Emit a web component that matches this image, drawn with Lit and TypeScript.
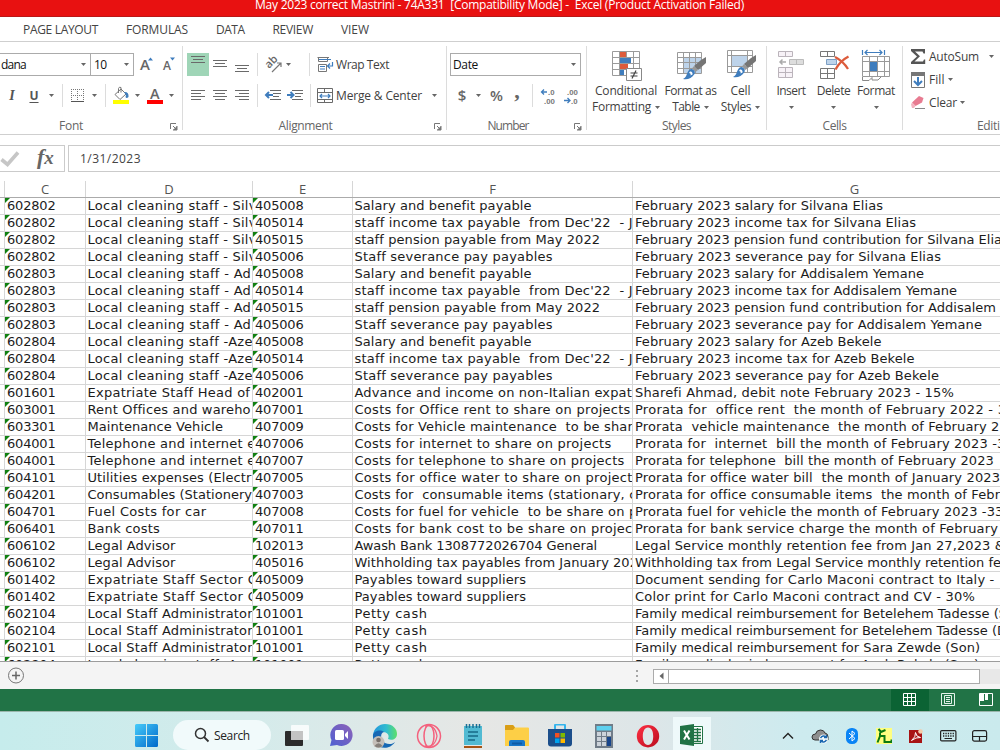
import { LitElement, css, html, svg } from 'lit'
import type { TemplateResult } from 'lit'
import { customElement, property, state } from 'lit/decorators.js'
import { classMap } from 'lit/directives/class-map.js'
import { styleMap } from 'lit/directives/style-map.js'

type Cell = [text: string, width: number]
type Row = [account: string, name: Cell, contra: string, contraName: Cell, note: Cell]

const SILVANA: Cell = ['Local cleaning staff - Silv', 168]
const ADDISALEM: Cell = ['Local cleaning staff - Ad', 162.5]
const AZEB: Cell = ['Local cleaning staff -Aze', 164]
const SALARY: Cell = ['Salary and benefit payable', 176]
const TAX: Cell = ['staff income tax payable  from Dec\'22  - J', 277]
const PENSION: Cell = ['staff pension payable from May 2022', 244.5]
const SEVERANCE: Cell = ['Staff severance pay payables', 197]
const LEGAL: Cell = ['Legal Advisor', 87]
const PHONE: Cell = ['Telephone and internet e', 167]
const SECTOR: Cell = ['Expatriate Staff Sector C', 168.5]
const ADMIN: Cell = ['Local Staff Administrator', 164]
const SUPPLIERS: Cell = ['Payables toward suppliers', 170.5]
const PETTY: Cell = ['Petty cash', 72]

const rows: Row[] = [
  ['602802', SILVANA, '405008', SALARY, ['February 2023 salary for Silvana Elias', 247]],
  ['602802', SILVANA, '405014', TAX, ['February 2023 income tax for Silvana Elias', 280]],
  ['602802', SILVANA, '405015', PENSION, ['February 2023 pension fund contribution for Silvana Elia', 366]],
  ['602802', SILVANA, '405006', SEVERANCE, ['February 2023 severance pay for Silvana Elias', 305]],
  ['602803', ADDISALEM, '405008', SALARY, ['February 2023 salary for Addisalem Yemane', 288]],
  ['602803', ADDISALEM, '405014', TAX, ['February 2023 income tax for Addisalem Yemane', 321]],
  ['602803', ADDISALEM, '405015', PENSION, ['February 2023 pension fund contribution for Addisalem', 360]],
  ['602803', ADDISALEM, '405006', SEVERANCE, ['February 2023 severance pay for Addisalem Yemane', 346]],
  ['602804', AZEB, '405008', SALARY, ['February 2023 salary for Azeb Bekele', 245.5]],
  ['602804', AZEB, '405014', TAX, ['February 2023 income tax for Azeb Bekele', 278.5]],
  ['602804', AZEB, '405006', SEVERANCE, ['February 2023 severance pay for Azeb Bekele', 303]],
  ['601601', ['Expatriate Staff Head of', 161.5], '402001', ['Advance and income on non-Italian expat', 276.5], ['Sharefi Ahmad, debit note February 2023 - 15%', 318]],
  ['603001', ['Rent Offices and wareho', 162], '407001', ['Costs for Office rent to share on projects', 275], ['Prorata for  office rent  the month of February 2022 - 3', 370]],
  ['603301', ['Maintenance Vehicle', 134.5], '407009', ['Costs for Vehicle maintenance  to be shar', 277.5], ['Prorata  vehicle maintenance  the month of February 2', 363.5]],
  ['604001', PHONE, '407006', ['Costs for internet to share on projects', 256], ['Prorata for  internet  bill the month of February 2023 -3', 369.5]],
  ['604001', PHONE, '407007', ['Costs for telephone to share on projects', 269], ['Prorata for telephone  bill the month of February 2023', 358]],
  ['604101', ['Utilities expenses (Electr', 163], '407005', ['Costs for office water to share on project', 277], ['Prorata for office water bill  the month of January 2023', 364]],
  ['604201', ['Consumables (Stationery', 163.5], '407003', ['Costs for  consumable items (stationary, c', 281], ['Prorata for office consumable items  the month of Febr', 364]],
  ['604701', ['Fuel Costs for car', 118], '407008', ['Costs for fuel for vehicle  to be share on p', 282], ['Prorata fuel for vehicle the month of February 2023 -33', 367.5]],
  ['606401', ['Bank costs', 71.5], '407011', ['Costs for bank cost to be share on projec', 277], ['Prorata for bank service charge the month of February', 362]],
  ['606102', LEGAL, '102013', ['Awash Bank 1308772026704 General', 241.5], ['Legal Service monthly retention fee from Jan 27,2023 &', 369]],
  ['606102', LEGAL, '405016', ['Withholding tax payables from January 202', 282.5], ['Withholding tax from Legal Service monthly retention fe', 365]],
  ['601402', SECTOR, '405009', SUPPLIERS, ['Document sending for Carlo Maconi contract to Italy -', 358.5]],
  ['601402', SECTOR, '405009', SUPPLIERS, ['Color print for Carlo Maconi contract and CV - 30%', 339]],
  ['602104', ADMIN, '101001', PETTY, ['Family medical reimbursement for Betelehem Tadesse (S', 371]],
  ['602104', ADMIN, '101001', PETTY, ['Family medical reimbursement for Betelehem Tadesse (D', 371]],
  ['602101', ADMIN, '101001', PETTY, ['Family medical reimbursement for Sara Zewde (Son)', 344]],
  ['602804', AZEB, '101001', PETTY, ['Family medical reimbursement for Azeb Bekele (Son)', 343]],
]

function icon(width: number, height: number, body: TemplateResult) {
  return html`<svg width=${width} height=${height} viewBox="0 0 ${width} ${height}" fill="none">${body}</svg>`
}

// Horizontal strokes for the paragraph alignment buttons: [x1, x2, y]
function strokes(lines: number[][], height = 16) {
  return icon(16, height, svg`${lines.map(([a, b, y]) => svg`<path d="M${a} ${y}H${b}" stroke="#6a6a6a"/>`)}`)
}

const caret = icon(5, 3, svg`<path d="M0 0H5L2.500 3Z" fill="#666"/>`)
const launcher = icon(8, 8, svg`<path d="M.5 6V.5H6M3 3L6 6M7 3V7H3" stroke="#777"/><path d="M7 3V7H3Z" fill="#777"/>`)

const brush = svg`
  <path d="M30 8L30 14L22 21L18 17L25 11Z" fill="#757575"/>
  <path d="M18 17L22 21L19.500 23L16 19.500Z" fill="#999"/>
  <path d="M15.500 20C18 20.500 19.500 22.500 18.500 25C16 29.500 11 31 7 30C10 28.500 10.500 26 11.500 23.500C12.500 21 14 20 15.500 20Z" fill="#3f7dbd"/>
  <path d="M14 22.500C15.500 22 17 23.500 16.500 25.500L14.500 26.500C15 25 14.500 24 13 24Z" fill="#fff"/>`

const icons = {
  grow: icon(16, 18, svg`<text x="2" y="14" font-family="Open Sans, sans-serif" font-size="15" font-weight="600" fill="#666">A</text><path d="M10 4.500L12.500 1.500L15 4.500Z" fill="#3f7dbd"/>`),
  shrink: icon(16, 18, svg`<text x="3" y="14" font-family="Open Sans, sans-serif" font-size="12" font-weight="600" fill="#666">A</text><path d="M10 1.500L12.500 4.500L15 1.500Z" fill="#3f7dbd"/>`),
  borders: icon(14, 14, svg`<path d="M.5 0V13M6.500 0V13M12.500 0V13M0 .5H13M0 6.500H13" stroke="#777" stroke-dasharray="1 1"/><path d="M0 12.500H13" stroke="#555"/>`),
  fill: icon(18, 18, svg`<path d="M3 7.500L9 2L14 7L8 12.500Z" fill="#fff" stroke="#777"/><path d="M6.500 6V1.500Q7 -.5 9 .5V5.500" stroke="#777"/><path d="M12 5Q17 4.500 16.500 10Q14.500 12 13.500 10Q14.500 7.500 12 5Z" fill="#3f7dbd"/><path d="M1 13H17V17H1Z" fill="#ff0"/>`),
  color: icon(18, 18, svg`<text x="4" y="12" font-family="Open Sans, sans-serif" font-size="14.500" font-weight="600" fill="#666">A</text><path d="M1 13H17V17H1Z" fill="#f00"/>`),
  top: strokes([[1, 15, 3.5], [3, 13, 6.5], [1, 15, 9.5]], 23),
  middle: strokes([[1, 15, 7.5], [3, 13, 10.5], [1, 15, 13.5]], 23),
  bottom: strokes([[1, 15, 12.5], [3, 13, 15.5], [1, 15, 18.5]], 23),
  left: strokes([[1, 15, 2.5], [1, 11, 5.5], [1, 15, 8.5], [1, 11, 11.5]]),
  center: strokes([[1, 15, 2.5], [3, 13, 5.5], [1, 15, 8.5], [3, 13, 11.5]]),
  right: strokes([[1, 15, 2.5], [5, 15, 5.5], [1, 15, 8.5], [5, 15, 11.5]]),
  orient: icon(18, 18, svg`<text transform="translate(5 13) rotate(-45)" font-family="Open Sans, sans-serif" font-size="11" font-weight="600" fill="#666">ab</text><path d="M8 16L16.500 7.500M13 7H17V11" stroke="#777" stroke-width="1.200"/>`),
  outdent: icon(17, 14, svg`<path d="M5 1.500H16M8 4.500H16M8 7.500H14M5 10.500H16" stroke="#6a6a6a"/><path d="M8 6H1.500M4 3L1 6L4 9" stroke="#3f7dbd" stroke-width="2"/>`),
  indent: icon(17, 14, svg`<path d="M5 1.500H16M8 4.500H16M8 7.500H14M5 10.500H16" stroke="#6a6a6a"/><path d="M0 6H6M3.500 3L6.500 6L3.500 9" stroke="#3f7dbd" stroke-width="2"/>`),
  wrap: icon(17, 16, svg`<path d="M1.500 1V4.500H10.500V1M.5 .5H12M1.500 7.500H9.500V14.500H1.500Z" stroke="#777"/><path d="M2 2.500H14M3 9.500H8M3 12H8M15.500 5V9H11M13 6.500L10.500 9L13 11.500" stroke="#3f7dbd" stroke-width="1.200"/>`),
  merge: icon(16, 16, svg`<path d="M.5 .5H15.500V14.500H.5ZM.5 4.500H15.500M.5 11.500H15.500M7.500 .5V4.500M7.500 11.500V14.500" stroke="#6a6a6a"/><path d="M3 8H13M5 6L3 8L5 10M11 6L13 8L11 10" stroke="#3f7dbd" stroke-width="1.200"/>`),
  more: icon(16, 16, svg`<text x="8" y="7" font-family="Liberation Sans, sans-serif" font-size="7.800" font-weight="700" fill="#777">.0</text><text x="4" y="15.500" font-family="Liberation Sans, sans-serif" font-size="7.800" font-weight="700" fill="#777">.00</text><path d="M7 4H1.500M4 1.500L1.500 4L4 6.500" stroke="#3f7dbd" stroke-width="1.300"/>`),
  less: icon(16, 16, svg`<text x="4" y="7" font-family="Liberation Sans, sans-serif" font-size="7.800" font-weight="700" fill="#777">.00</text><text x="8" y="15.500" font-family="Liberation Sans, sans-serif" font-size="7.800" font-weight="700" fill="#777">.0</text><path d="M1 12.500H7M4.500 10L7 12.500L4.500 15" stroke="#3f7dbd" stroke-width="1.300"/>`),
  conditional: icon(32, 32, svg`<path d="M1 2H29V26H1Z" fill="#fff"/><path d="M1.500 2.500H28.500V26.500H1.500ZM1.500 8.500H28.500M1.500 14.500H28.500M1.500 20.500H28.500M8.500 2V26M15.500 2V26M22.500 2V26" stroke="#9a9a9a"/><path d="M9 3H15V8H9ZM9 15H17V20H9Z" fill="#dc5b3b"/><path d="M9 9H20V14H9ZM9 21H13V26H9Z" fill="#3f7dbd"/><path d="M15.500 19.500H30.500V31.500H15.500Z" fill="#fff" stroke="#888"/><path d="M19.500 24H26.500M19.500 27H26.500M25 21.500L21 29.500" stroke="#444" stroke-width="1.200"/>`),
  table: icon(32, 32, svg`<path d="M8 9H25V24H8Z" fill="#bdd3ea"/><path d="M1.500 3.500H25.500V24.500H1.500ZM1.500 8.500H25.500M1.500 13.500H25.500M1.500 19.500H25.500M7.500 3V24M13.500 3V24M19.500 3V24" stroke="#9a9a9a"/>${brush}`),
  styles: icon(32, 32, svg`<path d="M6 7H22V17H6Z" fill="#bdd3ea"/><path d="M1.500 1.500H26.500V23.500H1.500ZM1.500 6.500H26.500M1.500 17.500H26.500M5.500 1V23M21.500 1V23" stroke="#9a9a9a"/><g transform="translate(0 -2)">${brush}</g>`),
  insert: icon(28, 32, svg`<path d="M1.500 2.500H15.500V7.500H1.500ZM8.500 2.500V7.500M1.500 18.500H15.500V28.500H1.500ZM8.500 18.500V28.500M1.500 23.500H15.500" fill="#f7f2f7" stroke="#bbb4bb"/><path d="M12.500 10.500H26.500V15.500H12.500ZM19.500 10.500V15.500" fill="#ddd" stroke="#bbb"/><path d="M9 13H3M5.500 10.500L3 13L5.500 15.500" stroke="#aaa" stroke-width="1.500"/>`),
  delete: icon(30, 32, svg`<path d="M1.500 2.500H15.500V7.500H1.500ZM8.500 2.500V7.500M1.500 19.500H15.500V29.500H1.500ZM8.500 19.500V29.500M1.500 24.500H15.500" stroke="#777"/><path d="M7.500 10.500H17.500V15.500H7.500Z" fill="#bdd3ea" stroke="#7d9fc4"/><path d="M16 8Q24 12 29 20M29.500 7.500Q21 12 16.500 20.500" stroke="#dc5b3b" stroke-width="2.300"/>`),
  format: icon(30, 32, svg`<path d="M1.500 7.500H28.500V27.500H1.500ZM1.500 12.500H28.500M1.500 22.500H28.500M8.500 7V27M16.500 7V27M23.500 7V27" stroke="#999"/><path d="M9 13H16V22H9Z" fill="#3f7dbd"/><path d="M1.500 28V31.500H8L11 28.500V31H17L20 28" fill="#fff" stroke="#888"/><path d="M1.500 1V6M23.500 1V6M4 3.500H21M6.500 1L4 3.500L6.500 6M18.500 1L21 3.500L18.500 6" stroke="#3f7dbd" stroke-width="1.200"/>`),
  sum: icon(16, 16, svg`<path d="M1 0H15V4.500H13.500L12.500 2.500H5L10 7.300L4.500 12.500H13L14 10.500H15.200V15H1V13L7 7.500L1 2Z" fill="#555"/>`),
  fillDown: icon(14, 16, svg`<path d="M.5 .5H13.500V15.500H.5Z" stroke="#777"/><path d="M0 0H14V4H0Z" fill="#777"/><path d="M7 5V13M3 9L7 13L11 9" stroke="#3f7dbd" stroke-width="2"/>`),
  eraser: icon(16, 16, svg`<path d="M9 1L13.500 3L12 7.500L5.500 11L2 7.500Z" fill="#e87b91"/><path d="M2 7.500L5.500 11L4 13H2L1 9.500Z" fill="#f3b2bf"/><path d="M5 13.500H15" stroke="#888"/>`),
  check: icon(20, 16, svg`<path d="M1.500 8.500L7.500 13.500L18 1.500" stroke="#c6c6c6" stroke-width="3.600"/>`),
  normal: icon(14, 14, svg`<path d="M.5 .5H12.500V12.500H.5ZM.5 4.500H12.500M.5 8.500H12.500M4.500 .5V12.500M8.500 .5V12.500" stroke="#fff"/>`),
  page: icon(14, 14, svg`<path d="M.5 .5H13.500V12.500H.5ZM3.500 2.500H10.500V10.500H3.500ZM5 4.500H9M5 6.500H9M5 8.500H9" stroke="#e4f2ea"/>`),
  breaks: icon(14, 14, svg`<path d="M.5 .5H13.500V12.500H.5Z" stroke="#fff"/><path d="M1 1H5V8H1ZM6 1H9V7H6Z" fill="#fff"/>`),
}

const apps = {
  start: icon(24, 24, svg`<defs><linearGradient id="w" x1="0" y1="0" x2="1" y2="1"><stop stop-color="#46ccfa"/><stop offset="1" stop-color="#0068ca"/></linearGradient></defs><path d="M1.500 0H11V11H0V1.500Q0 0 1.500 0ZM12 0H21.500Q23 0 23 1.500V11H12ZM0 12H11V23H1.500Q0 23 0 21.500ZM12 12H23V21.500Q23 23 21.500 23H12Z" fill="url(#w)"/>`),
  tasks: icon(24, 24, svg`<rect y="7" width="18" height="15" rx="1" fill="#2b2b2b"/><rect x="6" y="1" width="18" height="15" rx="1" fill="#fff" opacity=".8"/><path d="M6 7H18V16H6Z" fill="#c3c3c3"/>`),
  chat: icon(24, 24, svg`<defs><linearGradient id="t" x1="1" y1="0" x2="0" y2="1"><stop stop-color="#8d63b8"/><stop offset="1" stop-color="#4f5fd2"/></linearGradient></defs><path d="M12.500 0A11 11 0 1 1 8 21L1 22L2.500 16A11 11 0 0 1 12.500 0Z" fill="url(#t)"/><rect x="6" y="6" width="9" height="10" rx="1.500" fill="#fff"/><path d="M16 10L19 7V15L16 12Z" fill="#fff"/>`),
  edge: icon(26, 26, svg`<defs><linearGradient id="e" x1="0" y1="0" x2="1" y2="0"><stop stop-color="#2496dc"/><stop offset=".55" stop-color="#30bcd0"/><stop offset="1" stop-color="#5de069"/></linearGradient></defs><path d="M1 12C2 5 7 1 13 1C21 1 25 6 25 11C25 16 20 18 16 16C18 12 15 9 11 9C6 9 2 12 1 17Z" fill="url(#e)"/><path d="M1 12C2 8 8 6 12 9C8 10 8 17 13 20C17 22 21 21 23 19C18 27 7 26 3 20Q.5 16 1 12Z" fill="#1768b4"/><circle cx="6.500" cy="19" r="6" fill="#c5bfb9"/><circle cx="6.500" cy="17" r="2.300" fill="#766e69"/><path d="M2.500 23Q6.500 17.500 10.500 23Q6.500 26 2.500 23Z" fill="#86807b"/>`),
  gx: icon(26, 26, svg`<circle cx="13" cy="13" r="11.500" stroke="#f4617d" stroke-width="1.500"/><ellipse cx="13" cy="13" rx="5" ry="11" stroke="#f4617d" stroke-width="1.500"/><path d="M9 3Q19 1 21 13Q19 25 9 23" stroke="#f4617d" stroke-width="1.300"/>`),
  notepad: icon(20, 26, svg`<path d="M1 3H19V22H1Z" fill="#52bad2"/><path d="M1 23H19V25H1Z" fill="#a65314"/><path d="M3.500 1V5M6.500 1V5M10 1V5M13.500 1V5M16.500 1V5" stroke="#1b6f94" stroke-width="1.500"/><path d="M5 9H15M5 13H15M5 17H12" stroke="#176987" stroke-width="1.500"/>`),
  folder: icon(26, 24, svg`<path d="M1 2Q1 1 2 1H9L11 3.500H24Q25 3.500 25 4.500V22H1Z" fill="#fdcf46"/><path d="M1 2Q1 1 2 1H9L11 3.500L9 6H1Z" fill="#d99e16"/><path d="M5 22V18Q5 16 7 16H19Q21 16 21 18V22Z" fill="#1877c9"/><path d="M8 19.500H18" stroke="#0d5aa5" stroke-width="2"/>`),
  store: icon(24, 24, svg`<path d="M7 5V1.500Q7 .5 8 .5H16Q17 .5 17 1.500V5" stroke="#35b4ec" stroke-width="2"/><path d="M0 5H24V19.500Q24 22.500 21 22.500H3Q0 22.500 0 19.500Z" fill="#1c4f8b"/><path d="M7 9H11.500V13.500H7Z" fill="#f25022"/><path d="M12.500 9H17V13.500H12.500Z" fill="#7fba00"/><path d="M7 14.500H11.500V19H7Z" fill="#00a4ef"/><path d="M12.500 14.500H17V19H12.500Z" fill="#ffb900"/>`),
  calc: icon(20, 26, svg`<path d="M1 1H19V25H1Z" fill="#707c88"/><path d="M2.500 3H17.500V7.500H2.500Z" fill="#5ed0ef"/><path d="M3 9H7V13H3ZM8 9H12V13H8ZM13 9H17V13H13ZM3 14H7V18H3ZM8 14H12V18H8ZM3 19H7V23H3ZM8 19H12V23H8Z" fill="#ccd3da"/><path d="M13 14H17V23H13Z" fill="#17458b"/>`),
  opera: icon(24, 26, svg`<defs><linearGradient id="o" x1="0" y1="0" x2="1" y2="1"><stop stop-color="#ff3044"/><stop offset="1" stop-color="#b90c1c"/></linearGradient></defs><path fill-rule="evenodd" d="M12 2A11.200 11.200 0 1 1 12 24.400A11.200 11.200 0 1 1 12 2ZM12 4.500C8.500 4.500 6.800 8.500 6.800 13.200S8.500 22 12 22S17.200 18 17.200 13.200S15.500 4.500 12 4.500Z" fill="url(#o)"/>`),
  excel: icon(24, 24, svg`<path d="M12 2.500H22.500V19.500H12Z" fill="#fff" stroke="#217346"/><path d="M13 5.500H21M13 8.500H21M13 11.500H21M13 14.500H21M13 17.500H21M17.500 4V18" stroke="#217346" stroke-width="1.300"/><path d="M0 2L14 0V22L0 20Z" fill="#217346"/><path d="M4 6.500L9.500 15.500M9.500 6.500L4 15.500" stroke="#fff" stroke-width="2"/>`),
}

const tray = [
  icon(12, 8, svg`<path d="M1 6.500L6 1.500L11 6.500" stroke="#222" stroke-width="1.400"/>`),
  icon(18, 16, svg`<path d="M4 12Q1 12 1 9Q1 6 4.500 6Q5.500 2 9.500 2Q13 2 14 5Q17 5.500 17 9V12Z" fill="#8e8e8e" stroke="#333"/><circle cx="12.500" cy="11" r="4.500" fill="#f3fafc"/><path d="M9.500 10Q12 6.500 15 9M15.500 7V9.500H13M15.500 12Q13 15.500 10 13M9.500 15V12.500H12" stroke="#1a67b0" stroke-width="1.400"/>`),
  icon(12, 16, svg`<rect width="12" height="16" rx="5.500" fill="#0a84f5"/><path d="M3 5L9 10.500L6 13V3L9 5.500L3 11" stroke="#fff"/>`),
  icon(16, 16, svg`<path d="M0 0H16V16H0Z" fill="#ffff80"/><path d="M2.500 1L5 4L9.500 2M4 4.500V8L1.500 14.500M4 8H8.500V14H15.500V11.500" stroke="#0c7a12" stroke-width="2"/>`),
  icon(14, 14, svg`<path d="M0 1H13V14H0Z" fill="#a81414"/><path d="M2.500 11.500Q7 8 6.500 3.500Q7 8 11.500 8.500Q7 8 2.500 11.500Z" stroke="#fff"/><circle cx="11.500" cy="2.500" r="2.300" fill="#f4cba8"/>`),
  icon(17, 12, svg`<rect x=".6" y=".6" width="15.300" height="10.300" rx="1.200" stroke="#222" stroke-width="1.200"/><path d="M3 3.500H14M3 6H14" stroke="#222" stroke-width="1.300" stroke-dasharray="1.300 1.100"/><path d="M4.500 8.500H12" stroke="#222"/>`),
  icon(16, 12, svg`<rect x=".6" y=".6" width="14" height="10.500" rx="1.800" stroke="#222" stroke-width="1.200"/><path d="M.6 6.500H14.500M7.500 6.500V11" stroke="#222" stroke-width="1.200"/>`),
]

// One line of text tracked in or out so that it is `width` pixels long.
@customElement('fit-text')
export class FitText extends LitElement {
  @property({ type: String })
  text = ''

  @property({ type: Number })
  width = 0

  @state()
  private spacing = 0

  firstUpdated() {
    const natural = this.renderRoot.querySelector('span')!.getBoundingClientRect().width
    this.spacing = (this.width - natural) / this.text.length
  }

  render() {
    return html`<span style=${styleMap({ letterSpacing: `${this.spacing}px` })}>${this.text}</span>`
  }

  static styles = css`
    :host {
      display: block;
      flex: 0 0 auto;
      white-space: pre;
    }
    span {
      display: inline-block;
    }
  `
}

function fit(text: string, width: number) {
  return html`<fit-text .text=${text} .width=${width}></fit-text>`
}

@customElement('excel-ribbon')
export class ExcelRibbon extends LitElement {
  footer(name: string, width: number, hasLauncher = true) {
    return html`<div class="footer"><div class="name">${fit(name, width)}</div>${hasLauncher ? html`<i class="launch">${launcher}</i>` : ''}</div>`
  }

  big(glyph: TemplateResult, first: [string, number], second?: [string, number]) {
    return html`
      <div class="big">
        <div class="glyph">${glyph}</div>
        <div class="line">${fit(...first)}</div>
        <div class="line">${second ? fit(...second) : ''}${caret}</div>
      </div>
    `
  }

  render() {
    return html`
      <section class="group font">
        <div class="row r1 font1">
          <div class="combo name-box">${fit('dana', 25)}${caret}</div>
          <div class="combo size-box">${fit('10', 12.5)}${caret}</div>
          <b>${icons.grow}</b><b>${icons.shrink}</b>
        </div>
        <div class="row r2 font2">
          <b class="italic">I</b><b class="under">U</b><b>${caret}</b><b class="sep"></b>
          <b>${icons.borders}</b><b>${caret}</b><b class="sep"></b>
          <b>${icons.fill}</b><b>${caret}</b><b>${icons.color}</b><b>${caret}</b>
        </div>
        ${this.footer('Font', 24)}
      </section>
      <section class="group align">
        <div class="row r1 align1">
          <b class="on">${icons.top}</b><b>${icons.middle}</b><b>${icons.bottom}</b><b class="sep"></b>
          <b>${icons.orient}</b><b>${caret}</b><b class="sep far"></b>
          <b>${icons.wrap}</b>${fit('Wrap Text', 53)}
        </div>
        <div class="row r2 align2">
          <b>${icons.left}</b><b>${icons.center}</b><b>${icons.right}</b><b class="sep"></b>
          <b>${icons.outdent}</b><b>${icons.indent}</b><b class="sep"></b>
          <b>${icons.merge}</b>${fit('Merge & Center', 86)}<b>${caret}</b>
        </div>
        ${this.footer('Alignment', 54)}
      </section>
      <section class="group number">
        <div class="row r1">
          <div class="combo format-box">${fit('Date', 25)}${caret}</div>
        </div>
        <div class="row r2 number2">
          <b class="sign">$</b><b>${caret}</b><b class="sign">%</b><b class="comma">,</b><b class="sep"></b>
          <b>${icons.more}</b><b>${icons.less}</b>
        </div>
        ${this.footer('Number', 41)}
      </section>
      <section class="group styles">
        <div class="bigs">
          ${this.big(icons.conditional, ['Conditional', 62], ['Formatting', 59])}
          ${this.big(icons.table, ['Format as', 52], ['Table', 27.5])}
          ${this.big(icons.styles, ['Cell', 20], ['Styles', 30.5])}
        </div>
        ${this.footer('Styles', 29, false)}
      </section>
      <section class="group cells">
        <div class="bigs">
          ${this.big(icons.insert, ['Insert', 29])}
          ${this.big(icons.delete, ['Delete', 33.5])}
          ${this.big(icons.format, ['Format', 38])}
        </div>
        ${this.footer('Cells', 24, false)}
      </section>
      <section class="group editing">
        <div class="tools">
          <div class="tool wide"><b>${icons.sum}</b>${fit('AutoSum', 50)}${caret}</div>
          <div class="tool"><b>${icons.fillDown}</b>${fit('Fill', 15.5)}${caret}</div>
          <div class="tool"><b>${icons.eraser}</b>${fit('Clear', 28)}${caret}</div>
        </div>
        <div class="footer">${fit('Editing', 36)}</div>
      </section>
    `
  }

  static styles = css`
    :host {
      border-bottom: 1px solid #cfcfcf;
      box-sizing: border-box;
      color: #3f3f3f;
      display: flex;
      font: 12px/16px 'Open Sans', sans-serif;
      height: 93px;
      overflow: hidden;
      padding-top: 4px;
    }
    svg {
      display: block;
      flex: 0 0 auto;
      overflow: visible;
    }
    .group {
      border-right: 1px solid #dcdcdc;
      box-sizing: border-box;
      display: flex;
      flex: 0 0 auto;
      flex-direction: column;
      height: 84px;
      padding-top: 7px;
    }
    .font { width: 183px; }
    .align { width: 264px; }
    .number { width: 140px; }
    .styles { width: 180px; }
    .cells { width: 136px; }
    .editing { border-right: 0; width: 110px; }
    .row {
      align-items: center;
      display: grid;
      height: 23px;
    }
    .r2 {
      margin-top: 8px;
    }
    b {
      align-items: center;
      display: flex;
      font-weight: 400;
      height: 23px;
      justify-content: center;
    }
    .sep::before {
      background: #dcdcdc;
      content: '';
      height: 23px;
      width: 1px;
    }
    .far { padding-left: 12px; }
    .on { background: #9fd5b7; }
    .font1 { grid-template-columns: 91px 43px 23px 22px; }
    .font2 { grid-template-columns: 24px 20px 14px 9px 21px 12px 10px 22px 10px 26px 7px; }
    .align1, .align2 { padding-left: 4px; }
    .align1 { grid-template-columns: 22px 22px 22px 8px 24px 7px 23px 20px 1fr; }
    .align1 > fit-text, .align2 > fit-text { padding-left: 1px; }
    .align2 { grid-template-columns: 22px 22px 22px 8px 24px 20px 10px 20px 92px 14px; }
    .number2 { grid-template-columns: 30px 3px 33px 8px 23px 8px 37px; }
    .combo {
      align-items: center;
      border: 1px solid #ababab;
      box-sizing: border-box;
      color: #111;
      display: flex;
      height: 23px;
      justify-content: space-between;
      padding: 0 4px 0 3px;
    }
    .name-box { border-left: 0; padding-left: 1px; }
    .size-box { border-left: 0; }
    .format-box { margin-left: 3px; padding-left: 2px; width: 131px; }
    .italic { color: #555; font: italic 700 14px 'Liberation Serif', serif; }
    .under { color: #555; font-weight: 700; text-decoration: underline; text-underline-offset: 2px; }
    .sign { color: #666; font-size: 15px; font-weight: 600; height: 22px; padding-bottom: 1px; }
    .comma {
      color: #666;
      font: 700 22px/14px 'Liberation Serif', serif;
      height: 14px;
      padding-bottom: 9px;
    }
    .footer {
      align-items: center;
      color: #666;
      display: flex;
      height: 16px;
      justify-content: center;
      margin-bottom: -4px;
      margin-top: auto;
    }
    .name { display: flex; flex: 1; justify-content: center; }
    .launch { margin: 1px 4px 0 0; }
    .font .name { padding-right: 28px; }
    .align .name { padding-right: 6px; }
    .number .name { padding-right: 5px; }
    .editing .footer { justify-content: flex-start; padding-left: 74px; }
    .bigs {
      display: grid;
      margin-top: -4px;
    }
    .styles .bigs { grid-template-columns: 78px 51px 49px; }
    .cells .bigs { grid-template-columns: 48px 37px 48px; }
    .big {
      align-items: center;
      display: flex;
      flex-direction: column;
    }
    .glyph { padding-bottom: 2px; }
    .styles .glyph { padding-left: 2px; }
    .line {
      align-items: center;
      display: flex;
      gap: 4px;
      height: 16px;
      justify-content: center;
    }
    .tools {
      margin-top: -8px;
    }
    .tool {
      align-items: center;
      display: flex;
      gap: 3px;
      height: 23px;
      padding-left: 7px;
    }
    .tool b { width: 16px; }
    .wide > svg { margin-left: 7px; }
  `
}

@customElement('excel-sheet')
export class ExcelSheet extends LitElement {
  render() {
    return html`
      <div class="head">
        ${['', 'C', 'D', 'E', 'F', 'G'].map(name => html`<span>${name}</span>`)}
      </div>
      ${rows.map(([account, name, contra, contraName, note]) => html`
        <div class="row">
          <span></span>
          <span class="mark">${fit(account, 48.5)}</span>
          <span class="label">${fit(name[0], name[1] + 1)}</span>
          <span class="mark">${fit(contra, 48.5)}</span>
          <span class="label">${fit(contraName[0], contraName[1] + 1)}</span>
          <span>${fit(note[0], note[1] + 1)}</span>
        </div>
      `)}
    `
  }

  static styles = css`
    :host {
      box-sizing: border-box;
      color: #1c1c1c;
      display: block;
      font: 13px/16px 'DejaVu Sans', sans-serif;
      height: 480px;
      overflow: hidden;
    }
    .head, .row {
      display: grid;
      grid-template-columns: 5px 81px 167px 100px 280px 444px;
      height: 17px;
    }
    .head {
      border-bottom: 1px solid #ababab;
      box-sizing: border-box;
      color: #555;
      font: 13px/17px 'Open Sans', sans-serif;
      text-align: center;
    }
    span {
      border-right: 1px solid #d6d6d6;
      box-sizing: border-box;
      min-width: 0;
      overflow: hidden;
      position: relative;
    }
    .row span {
      border-bottom: 1px solid #d6d6d6;
      height: 17px;
      padding-left: 2px;
    }
    .row .label { padding-left: 1.5px; }
    .mark::before {
      border-right: 5px solid transparent;
      border-top: 5px solid #108010;
      content: '';
      left: 0;
      position: absolute;
      top: 0;
    }
  `
}

@customElement('app-root')
export class AppRoot extends LitElement {
  render() {
    return html`
      <div class="title">${fit('May 2023 correct Mastrini - 74A331  [Compatibility Mode] -  Excel (Product Activation Failed)', 489)}</div>
      <nav>
        ${fit('PAGE LAYOUT', 75)}${fit('FORMULAS', 62)}${fit('DATA', 28.5)}${fit('REVIEW', 40.5)}${fit('VIEW', 28)}
      </nav>
      <excel-ribbon></excel-ribbon>
      <div class="formula">
        <div class="fx">${icons.check}<em>f<small>x</small></em></div>
        <div class="value">${fit('1/31/2023', 61)}</div>
      </div>
      <excel-sheet></excel-sheet>
      <div class="scroll">
        ${icon(18, 18, svg`<circle cx="9" cy="8.500" r="7.500" stroke="#777"/><path d="M9 4.500V12.500M5 8.500H13" stroke="#666" stroke-width="1.500"/>`)}
        <div class="dots">${icon(3, 14, svg`<path d="M0 1H2V3H0ZM0 6H2V8H0ZM0 11H2V13H0Z" fill="#a5a5a5"/>`)}</div>
        <div class="track"><i class="arrow">${icon(5, 8, svg`<path d="M4.500 .5V7.500L.5 4Z" fill="#666"/>`)}</i><i class="thumb"></i></div>
      </div>
      <div class="status"><i class="active">${icons.normal}</i><i>${icons.page}</i><i>${icons.breaks}</i></div>
      <footer>
        <i class="app">${apps.start}</i>
        <div class="search">${icon(16, 16, svg`<circle cx="6.500" cy="6.500" r="5" stroke="#333" stroke-width="1.500"/><path d="M10 10L14.500 14.500" stroke="#333" stroke-width="1.800"/>`)}${fit('Search', 36)}</div>
        ${Object.entries(apps).filter(([name]) => name !== 'start').map(([name, glyph]) => html`
          <i class=${classMap({ app: true, open: name === 'excel' })}>${glyph}</i>
        `)}
        <div class="tray">${tray.map(glyph => html`<i>${glyph}</i>`)}</div>
      </footer>
    `
  }

  static styles = css`
    :host {
      background: #fff;
      color: #444;
      display: block;
      font: 12px/16px 'Open Sans', sans-serif;
      height: 750px;
      overflow: hidden;
      width: 1000px;
    }
    svg {
      display: block;
      flex: 0 0 auto;
    }
    i {
      align-items: center;
      display: flex;
      justify-content: center;
    }
    .title {
      background: #e81111;
      border-bottom: 1px solid #bb1717;
      box-sizing: border-box;
      color: #fff;
      display: flex;
      height: 17px;
      justify-content: center;
      line-height: 10px;
      padding-right: 1px;
    }
    nav {
      align-items: center;
      border-bottom: 1px solid #cfcfcf;
      box-sizing: border-box;
      display: flex;
      gap: 28px;
      height: 25px;
      padding: 2px 0 0 23px;
    }
    .formula {
      display: flex;
      gap: 3px;
      height: 36px;
      padding-top: 10px;
    }
    .fx, .value {
      align-items: center;
      border: 1px solid #cbcbcb;
      box-sizing: border-box;
      display: flex;
      height: 27px;
    }
    .fx {
      border-left: 0;
      gap: 17px;
      width: 65px;
    }
    .value {
      border-right: 0;
      color: #444;
      flex: 1;
      padding-left: 11px;
    }
    em {
      color: #666;
      font: italic 700 22px/20px 'Liberation Serif', serif;
      padding-bottom: 3px;
    }
    small { font-size: 19px; }
    .scroll {
      align-items: center;
      background: #f4f4f4;
      border-top: 1px solid #9c9c9c;
      box-sizing: border-box;
      display: flex;
      height: 28px;
      padding-left: 7px;
    }
    .dots { margin-left: 611px; }
    .track {
      background: #e8e8e8;
      display: flex;
      height: 15px;
      margin: 1px 0 0 14px;
      width: 347px;
    }
    .arrow, .thumb {
      background: #fff;
      border: 1px solid #ababab;
      box-sizing: border-box;
    }
    .arrow { width: 16px; }
    .thumb { margin-left: -1px; width: 312px; }
    .status {
      background: #217346;
      border-bottom: 1px solid #9ab5ab;
      box-sizing: border-box;
      display: flex;
      height: 23px;
      padding-left: 891px;
    }
    .status i { flex: 0 0 38px; }
    .active { background: #0b6334; }
    footer {
      background: linear-gradient(90deg, #c6ecec, #d4ebeb 25%, #e6e7e5 48%, #dde6e8 65%, #cdebef 80%, #caeaed);
      display: flex;
      height: 38px;
    }
    .app {
      flex: 0 0 43.9px;
      height: 29px;
      padding-top: 9px;
    }
    .app:first-child { margin-left: 125px; }
    .search {
      align-items: center;
      background: #f1fafb;
      border-radius: 15px;
      color: #222;
      display: flex;
      flex: 0 0 auto;
      gap: 4px;
      height: 30px;
      margin: 8px 4.3px 0 4px;
      padding-left: 21px;
      width: 77px;
    }
    .search fit-text { padding-top: 2px; }
    .open {
      background: linear-gradient(#eef9fa, #eef9fa) center top / 38px 100% no-repeat;
      margin-top: 5px;
      padding-top: 4px;
    }
    .tray {
      display: flex;
      height: 29px;
      margin-left: 58px;
      padding-top: 9px;
    }
    .tray i { flex: 0 0 32px; }
  `
}

declare global {
  interface HTMLElementTagNameMap {
    'app-root': AppRoot
    'excel-ribbon': ExcelRibbon
    'excel-sheet': ExcelSheet
    'fit-text': FitText
  }
}
